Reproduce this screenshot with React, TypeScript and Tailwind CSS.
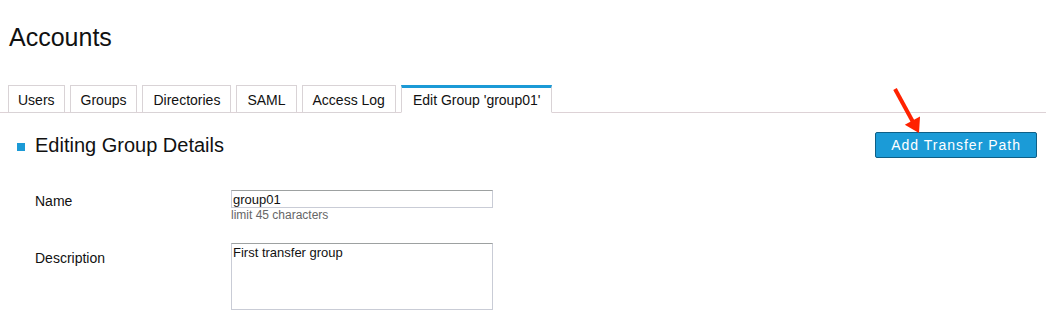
import React from "react";

const tabs = [
  { t: "Users", p: "px-[9px]" },
  { t: "Groups", p: "px-[10px]" },
  { t: "Directories", p: "px-[10px]" },
  { t: "SAML", p: "px-[10px]" },
  { t: "Access Log", p: "px-[10px]" },
];

export default function App() {
  return (
    <div className="relative w-full h-[318px] bg-white font-['Liberation_Sans',Arial,sans-serif] text-[#111] overflow-hidden">
      <h1 className="pt-[23px] pl-[9px] text-[25px] leading-[28px] font-normal">Accounts</h1>

      <div className="mt-[34px] flex items-end gap-[5px] pl-[8px] border-b border-[#ddd2d6]">
        {tabs.map(({ t, p }) => (
          <div
            key={t}
            className={`-mb-px h-[28px] border border-[#d9d3d6] ${p} pt-[6px] text-[14px] leading-[16px] text-[#111] bg-white`}
          >
            {t}
          </div>
        ))}
        <div className="-mb-px h-[28px] border-x border-[#d9d3d6] border-t-[3px] border-t-[#1b9ad6] border-b border-b-white px-[11px] pt-[4px] text-[14px] leading-[16px] text-[#111] bg-white">
          Edit Group 'group01'
        </div>
      </div>

      <div className="mt-[19px] flex items-center justify-between pl-[17px] pr-[9px]">
        <div className="flex items-center">
          <span className="mt-[3px] w-[8px] h-[8px] bg-[#1b9ad6]" />
          <h2 className="ml-[10px] text-[20px] leading-[24px] font-normal">Editing Group Details</h2>
        </div>
        <button className="h-[26px] rounded-[2px] border border-[#0e5f86] bg-[#1b9bd7] px-[15px] text-[14px] leading-[16px] tracking-[1px] text-white">
          Add Transfer Path
        </button>
      </div>

      <div className="mt-[32px] pl-[35px]">
        <div className="flex">
          <div className="w-[196px] pt-[3px] text-[14px] leading-[16px]">Name</div>
          <div className="flex flex-col">
            <input
              readOnly
              defaultValue="group01"
              className="w-[262px] h-[18px] border border-[#c9ccd6] border-t-[#9da1a1] px-[1px] text-[13px] leading-[15px] text-[#111] outline-none"
            />
            <span className="text-[12px] leading-[14px] text-[#666]">limit 45 characters</span>
          </div>
        </div>
        <div className="mt-[21px] flex">
          <div className="w-[196px] pt-[7px] text-[14px] leading-[16px]">Description</div>
          <textarea
            readOnly
            defaultValue="First transfer group"
            className="w-[262px] h-[67px] resize-none border border-[#c9ccd6] border-t-[#9da1a1] px-[1px] pt-[1px] text-[13px] leading-[15px] text-[#111] outline-none"
          />
        </div>
      </div>

      <svg className="absolute left-[888px] top-[84px]" width="40" height="52" viewBox="0 0 40 52">
        <line x1="7" y1="5" x2="25" y2="38" stroke="#ff2200" strokeWidth="4" strokeLinecap="butt" />
        <polygon points="31,49 32,32.5 16.8,40.8" fill="#ff2200" />
      </svg>
    </div>
  );
}
